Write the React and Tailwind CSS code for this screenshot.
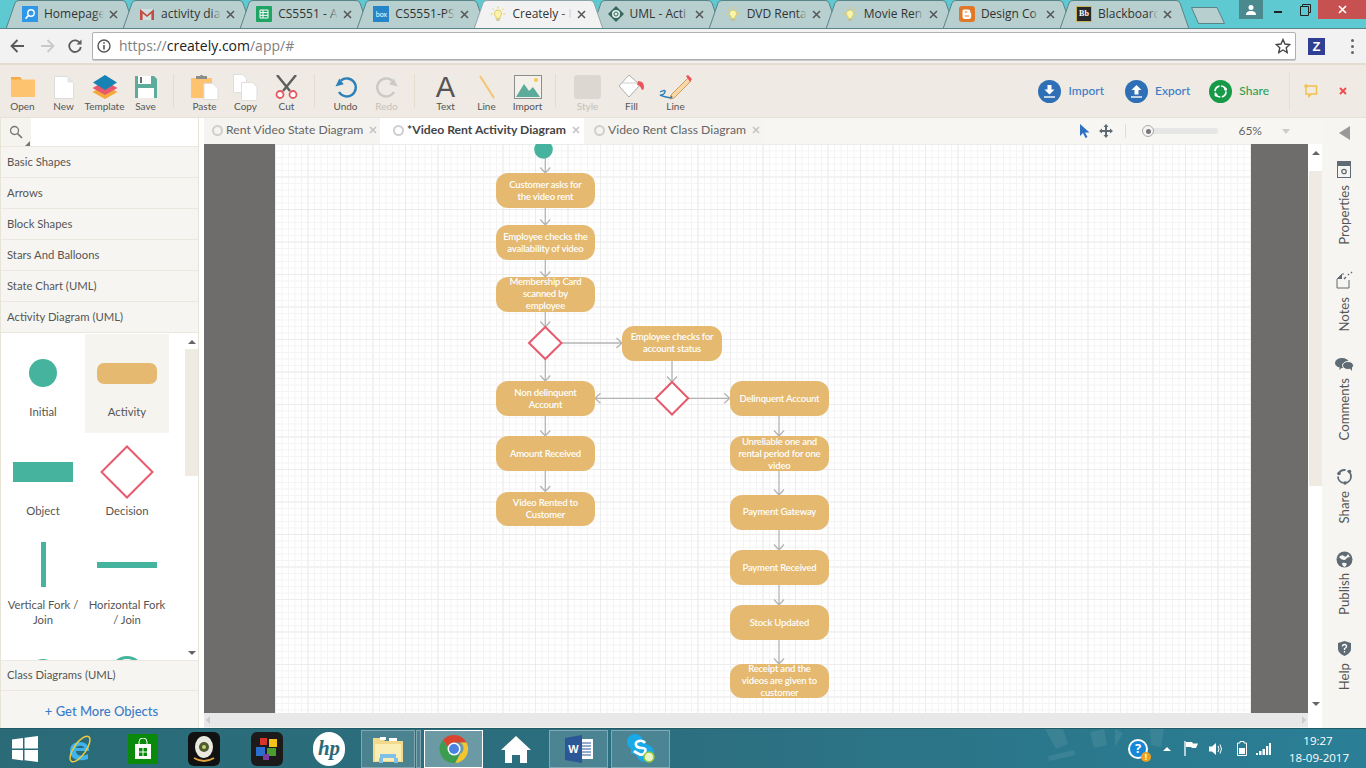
import React from 'react';

const uiFont = "[font-family:Lato,'Liberation_Sans',sans-serif]";

// ---------- browser chrome ----------
function Favicon({ kind }) {
    if (kind === 'search') return <div className="w-4 h-4 bg-[#2f96e8] flex items-center justify-center"><svg width="12" height="12" viewBox="0 0 12 12"><circle cx="7" cy="5" r="3.2" fill="none" stroke="#fff" strokeWidth="1.4" /><path d="M4.6 7.4 1.6 10.6" stroke="#fff" strokeWidth="1.6" /></svg></div>;
    if (kind === 'gmail') return <svg width="16" height="16" viewBox="0 0 16 16"><rect x="1" y="3" width="14" height="11" fill="#cfe0de" /><path d="M1 14V3l7 6 7-6v11h-2.6V7.4L8 11 3.6 7.4V14z" fill="#c44c40" /></svg>;
    if (kind === 'sheet') return <svg width="16" height="16" viewBox="0 0 16 16"><rect width="16" height="16" rx="1" fill="#1fa463" /><path d="M4 4h8v8H4zM4 6.6h8M4 9.3h8M7 4v8" fill="none" stroke="#fff" /></svg>;
    if (kind === 'box') return <div className="w-4 h-4 bg-[#2486c9] flex items-center justify-center text-[7px] leading-none text-white">box</div>;
    if (kind === 'blogger') return <svg width="16" height="16" viewBox="0 0 16 16"><rect width="16" height="16" rx="3" fill="#e0782a" /><path d="M5 3.5h4a2.4 2.4 0 0 1 2.4 2.4V7c.6 0 .8.4.8.8v2.7A2.5 2.5 0 0 1 9.700 13H6a2.500 2.500 0 0 1-2.500-2.500V5A1.500 1.500 0 0 1 5 3.500z" fill="#fff" /><path d="M5.800 6h2.500M5.800 10h4.200" stroke="#e0782a" strokeWidth="1.200" /></svg>;
    if (kind === 'bb') return <div className="w-4 h-4 bg-[#26282a] border border-[#c8b25a] flex items-center justify-center text-[8px] font-bold leading-none text-white [font-family:'Liberation_Serif',serif]">Bb</div>;
    if (kind === 'uml') return <svg width="16" height="16" viewBox="0 0 16 16"><path d="M8 0 16 8 8 16 0 8z" fill="#39695e" /><circle cx="8" cy="8" r="4" fill="#dfeee8" /><circle cx="8" cy="8" r="2" fill="none" stroke="#39695e" /></svg>;
    return (
        <svg width="18" height="18" viewBox="0 0 18 18">
            <path d="M9 4.500a4 4 0 0 0-2.400 7.200V14h4.800v-2.300A4 4 0 0 0 9 4.500z" fill="#fbf3a8" stroke="#d9c860" />
            <path d="M7 15h4v1.500H7z" fill="#bdb98c" />
            <path d="M9 .5v2.200M2.800 3l1.600 1.600M15.200 3l-1.600 1.600M.8 9h2.200M15 9h2.200" stroke="#ecc94b" strokeWidth="1.100" />
        </svg>
    );
}

const browserTabs = [
    ['search', 'Homepage'], ['gmail', 'activity dia'], ['sheet', 'CS5551 - A'], ['box', 'CS5551-PS'],
    ['bulb', 'Creately - I', true], ['uml', 'UML - Acti'], ['bulb', 'DVD Renta'], ['bulb', 'Movie Ren'],
    ['blogger', 'Design Co'], ['bb', 'Blackboard'],
];

function BrowserTab({ icon, title, active }) {
    const fade = active ? 'from-transparent to-[#f2f2f2]' : 'from-transparent to-[#b7cfcf]';
    return (
        <div className={`relative w-[129px] h-[28px] -mr-[11.9px] shrink-0 ${active ? 'z-10' : ''}`}>
            <svg className="absolute inset-0" width="129" height="29" viewBox="0 0 129 29">
                <path d="M0 29 9 3Q10 .5 13 .5H116Q119 .5 120 3L129 29Z" fill={active ? '#f2f2f2' : '#b7cfcf'} stroke={active ? '#8fa5a8' : '#5a8388'} />
            </svg>
            <div className="relative h-full flex items-center pl-[16px]">
                <div className="w-4 h-4 flex items-center justify-center shrink-0"><Favicon kind={icon} /></div>
                <div className="relative ml-[6px] w-[60px] overflow-hidden whitespace-nowrap text-[12px] leading-[16px] text-[#333] [font-family:'Open_Sans',sans-serif]">
                    {title}
                    <div className={`absolute inset-y-0 right-0 w-[10px] bg-gradient-to-r ${fade}`} />
                </div>
                <svg className="ml-[5px] shrink-0" width="9" height="9" viewBox="0 0 9 9"><path d="M1 1l7 7M8 1 1 8" stroke="#555" strokeWidth="1.500" /></svg>
            </div>
        </div>
    );
}

function TabStrip() {
    return (
        <div className="h-[28px] shrink-0 bg-[#5ec9d1] flex pl-[6px] relative overflow-hidden">
            {browserTabs.map((t) => <BrowserTab key={t[1]} icon={t[0]} title={t[1]} active={t[2]} />)}
            <svg className="ml-[14px] mt-[7px] shrink-0" width="34" height="17" viewBox="0 0 34 17"><path d="M.5 .5H26L33.500 16.500H7.500Z" fill="#b7cfcf" stroke="#5a8388" /></svg>
            <div className="ml-auto flex items-start">
                <div className="w-[24px] h-[19px] bg-[#4a8a8f] flex items-center justify-center">
                    <svg width="12" height="12" viewBox="0 0 12 12"><circle cx="6" cy="3.500" r="2.500" fill="#fff" /><path d="M1 11c0-3 2-4 5-4s5 1 5 4z" fill="#fff" /></svg>
                </div>
                <div className="w-[30px] h-[19px] flex items-center justify-center pt-[4px]"><div className="w-[8px] h-[2px] bg-[#222]" /></div>
                <div className="w-[25px] h-[19px] flex items-center justify-center">
                    <svg width="11" height="12" viewBox="0 0 11 12"><path d="M2.500 2.500V.5h8v8h-2M.5 2.500h8v9h-8z" fill="none" stroke="#222" /></svg>
                </div>
                <div className="w-[48px] h-[19px] bg-[#c75050] flex items-center justify-center">
                    <svg width="9" height="9" viewBox="0 0 9 9"><path d="M1 1l7 7M8 1 1 8" stroke="#fff" strokeWidth="1.600" /></svg>
                </div>
            </div>
        </div>
    );
}

function AddressRow() {
    return (
        <div className="h-[37px] shrink-0 bg-[#f2f2f2] border-t border-[#5a8388] border-b-2 border-b-[#e3dccf] flex items-center">
            <svg className="ml-[10px]" width="15" height="14" viewBox="0 0 15 14"><path d="M14 7H2M7.500 1 1.500 7l6 6" fill="none" stroke="#5a5a5a" strokeWidth="1.800" /></svg>
            <svg className="ml-[15px]" width="15" height="14" viewBox="0 0 15 14"><path d="M1 7h12M7.500 1l6 6-6 6" fill="none" stroke="#c9c9c9" strokeWidth="1.800" /></svg>
            <svg className="ml-[13px]" width="14" height="14" viewBox="0 0 14 14"><path d="M12.200 4.500A5.800 5.800 0 1 0 12.800 8" fill="none" stroke="#5a5a5a" strokeWidth="1.800" /><path d="M13.500 .5v5h-5z" fill="#5a5a5a" /></svg>
            <div className="ml-[10px] w-[1204px] h-[28px] bg-white border border-[#b0b0b0] rounded-[2px] shadow-[0_1px_0_#c8c8c8] flex items-center pl-[4px] pr-[4px]">
                <svg width="14" height="14" viewBox="0 0 14 14"><circle cx="7" cy="7" r="6" fill="none" stroke="#555" strokeWidth="1.400" /><path d="M7 6v4.500M7 3.200v1.600" stroke="#555" strokeWidth="1.600" /></svg>
                <div className="ml-[8px] text-[14px] leading-none text-[#808080] [font-family:'Open_Sans',sans-serif]">https://<span className="text-[#222]">creately.com</span>/app/#</div>
                <svg className="ml-auto" width="16" height="16" viewBox="0 0 16 16"><path d="M8 1.500l2 4.500 4.800.5-3.600 3.200 1 4.800L8 12l-4.200 2.500 1-4.800L1.200 6.500 6 6z" fill="none" stroke="#444" strokeWidth="1.400" /></svg>
            </div>
            <div className="ml-[12px] w-[17px] h-[17px] bg-[#2f3f94] flex items-center justify-center text-[13px] font-bold leading-none text-white [font-family:'Liberation_Sans',sans-serif]">Z</div>
            <div className="ml-[26px] flex flex-col gap-[3px]">
                <div className="w-[3px] h-[3px] rounded-full bg-[#666]" />
                <div className="w-[3px] h-[3px] rounded-full bg-[#666]" />
                <div className="w-[3px] h-[3px] rounded-full bg-[#666]" />
            </div>
        </div>
    );
}

// ---------- creately toolbar ----------
const ToolIcons = {
    open: <svg width="24" height="20" viewBox="0 0 24 20"><path d="M0 0h9l2 2.500h13V20H0z" fill="#fdc36f" /><path d="M0 0h9l2 2.500H0z" fill="#f5ab45" /></svg>,
    page: <svg width="20" height="23" viewBox="0 0 20 23"><path d="M.5 .5h13l6 6v16H.5z" fill="#fff" stroke="#dcdcdc" /><path d="M13.500 .5v6h6z" fill="#e6e6e6" /></svg>,
    template: <svg width="26" height="24" viewBox="0 0 26 24"><path d="M13 10 25.500 17 13 24 .5 17z" fill="#f7a83c" /><path d="M13 6 25.500 13 13 20 .5 13z" fill="#e85a6b" /><path d="M13 0 25 7.500 13 15 1 7.500z" fill="#1783b5" /></svg>,
    save: <svg width="22" height="22" viewBox="0 0 22 22"><path d="M0 0h19l3 3v19H0z" fill="#5cab9b" /><path d="M3 0h13v8H3z" fill="#fff" /><path d="M5 1h2v6H5z" fill="#6b6b6b" /><path d="M3 12h16v10H3z" fill="#fff" /></svg>,
    paste: <svg width="28" height="26" viewBox="0 0 28 26"><path d="M0 4h21v20H0z" fill="#fdc36f" /><path d="M5 2h4q1.500-2.500 3 0h4v3H5z" fill="#8c8c8c" /><path d="M13 9.500h9l5 5V25.500H13z" fill="#fff" stroke="#dedede" /></svg>,
    copy: <svg width="25" height="27" viewBox="0 0 25 27"><path d="M.5 .5h9l4 4v14H.5z" fill="#fff" stroke="#dedede" /><path d="M8.500 8.500h11l4.500 4.500v13.500H8.500z" fill="#fff" stroke="#dedede" /></svg>,
    cut: <svg width="23" height="24" viewBox="0 0 23 24"><path d="M2 0l13 16M21 0 8 16" stroke="#5e5e5e" strokeWidth="2.400" /><circle cx="5" cy="19.500" r="3.500" fill="#fff" stroke="#e8555f" strokeWidth="1.800" /><circle cx="18" cy="19.500" r="3.500" fill="#fff" stroke="#e8555f" strokeWidth="1.800" /></svg>,
    undo: <svg width="24" height="24" viewBox="0 0 24 24"><path d="M7 5.500A9 9 0 1 1 5 17" fill="none" stroke="#2c7fb8" strokeWidth="2.400" /><path d="M1 11 9.500 10 6 3.500z" fill="#2c7fb8" transform="rotate(-8 5 8)" /></svg>,
    redo: <svg width="24" height="24" viewBox="0 0 24 24"><path d="M17 5.500A9 9 0 1 0 19 17" fill="none" stroke="#c9c9c5" strokeWidth="2.400" /><path d="M23 11 14.500 10 18 3.500z" fill="#c9c9c5" transform="rotate(8 19 8)" /></svg>,
    line: <svg width="18" height="24" viewBox="0 0 18 24"><path d="M2 1 16 23" stroke="#f6c36f" strokeWidth="2" /></svg>,
    image: <svg width="28" height="24" viewBox="0 0 28 24"><rect x=".5" y=".5" width="27" height="23" fill="#f4f1ea" stroke="#8d8d8d" /><path d="M2 22 10 9l5 7 4-4 7 10z" fill="#5cab9b" /><circle cx="22" cy="5" r="2" fill="#f6c64f" /></svg>,
    style: <div className="w-[27px] h-[24px] rounded-[3px] bg-[#dcd8d1]" />,
    fill: <svg width="28" height="26" viewBox="0 0 28 26"><path d="M11 1 22 11 11 23 1 12z" fill="#fff" stroke="#adadad" /><path d="M4 9h17" stroke="#cfcfcf" /><path d="M20 7q6 0 6 6 0 3-2 3-2-5-5-5z" fill="#e8555f" /></svg>,
    pencil: <svg width="34" height="26" viewBox="0 0 34 26"><path d="M12 21 29 4l3 3-17 17-4 1z" fill="#f7d9a8" stroke="#d89a58" /><path d="M27 2l2-1 4 4-2 3z" fill="#e8555f" /><path d="M1 18q6-3 5 0t-4 3 5 2 5-1" fill="none" stroke="#2c7fb8" strokeWidth="1.300" /></svg>,
};

function ToolItem({ icon, label, muted, children }) {
    return (
        <div className="w-[41px] flex flex-col items-center shrink-0">
            <div className="h-[26px] flex items-center justify-center">{children || ToolIcons[icon]}</div>
            <div className={`text-[10px] leading-[12px] ${muted ? 'text-[#c4c1ba]' : 'text-[#555]'}`}>{label}</div>
        </div>
    );
}

const Gap = () => (
    <div className="w-[18px] h-[34px] shrink-0 pl-[7px]"><div className="w-px h-full bg-[#e3ddd0]" /></div>
);

function BigButton({ kind, label, color, bg }) {
    return (
        <div className="flex items-center gap-[7px]">
            <div className={`w-[23px] h-[23px] rounded-full flex items-center justify-center ${bg}`}>
                {kind === 'share' ? (
                    <svg width="15" height="15" viewBox="0 0 15 15"><circle cx="7.500" cy="7.500" r="5.500" fill="none" stroke="#fff" strokeWidth="1.700" strokeDasharray="7 1.600" /><circle cx="3" cy="11" r="1.500" fill="#fff" /><circle cx="12.500" cy="5" r="1.500" fill="#fff" /></svg>
                ) : (
                    <svg width="13" height="14" viewBox="0 0 13 14">
                        <path d={kind === 'down' ? 'M4.500 1h4v4.500h3L6.500 10.500 1.500 5.500h3z' : 'M6.500 1l5 5h-3v4.500h-4V6h-3z'} fill="#fff" />
                        <path d="M1 13h11" stroke="#fff" strokeWidth="1.400" />
                    </svg>
                )}
            </div>
            <span className={`text-[12px] font-medium leading-none ${color}`}>{label}</span>
        </div>
    );
}

function AppToolbar() {
    return (
        <div className="h-[53px] shrink-0 bg-[#efeae3] border-b border-[#e7e1d6] flex items-start pt-[9px] pl-[2px]">
            <ToolItem icon="open" label="Open" /><ToolItem icon="page" label="New" /><ToolItem icon="template" label="Template" /><ToolItem icon="save" label="Save" />
            <Gap />
            <ToolItem icon="paste" label="Paste" /><ToolItem icon="copy" label="Copy" /><ToolItem icon="cut" label="Cut" />
            <Gap />
            <ToolItem icon="undo" label="Undo" /><ToolItem icon="redo" label="Redo" muted />
            <Gap />
            <ToolItem label="Text"><span className="text-[29px] leading-[26px] text-[#555] [font-family:'Liberation_Sans',sans-serif]">A</span></ToolItem>
            <ToolItem icon="line" label="Line" /><ToolItem icon="image" label="Import" />
            <Gap />
            <div className="w-px" />
            <ToolItem icon="style" label="Style" muted />
            <div className="w-[3px]" />
            <ToolItem icon="fill" label="Fill" />
            <div className="w-[3px]" />
            <ToolItem icon="pencil" label="Line" />
            <div className="ml-auto flex items-center h-[40px] -mt-[3px]">
                <BigButton kind="down" label="Import" color="text-[#3a7cc8]" bg="bg-[#2f6fb5]" />
                <div className="w-[21px]" />
                <BigButton kind="up" label="Export" color="text-[#3a7cc8]" bg="bg-[#2f6fb5]" />
                <div className="w-[19px]" />
                <BigButton kind="share" label="Share" color="text-[#2aa050]" bg="bg-[#169a47]" />
                <div className="ml-[20px] w-px h-[38px] bg-[#e5dfd3]" />
                <svg className="ml-[14px]" width="14" height="14" viewBox="0 0 14 14"><path d="M2 2h10.500v8H7l-2 2.500V10H2z" fill="none" stroke="#efc04a" strokeWidth="1.400" /><rect x=".5" y=".5" width="3" height="3" fill="#efc04a" /></svg>
                <svg className="ml-[21px] mr-[19px]" width="8" height="8" viewBox="0 0 8 8"><path d="M1 1l6 6M7 1 1 7" stroke="#ee4a4a" strokeWidth="1.800" /></svg>
            </div>
        </div>
    );
}

// ---------- left sidebar ----------
const sections = ['Basic Shapes', 'Arrows', 'Block Shapes', 'Stars And Balloons', 'State Chart (UML)', 'Activity Diagram (UML)'];

function ShapeCell({ label, active, shapeClass, children }) {
    return (
        <div className={`h-[99px] flex flex-col items-center ${active ? 'bg-[#f6f4ef]' : ''}`}>
            <div className={`w-full flex items-center justify-center shrink-0 ${shapeClass}`}>{children}</div>
            <div className="text-[11.3px] leading-[15px] text-[#555] text-center">{label}</div>
        </div>
    );
}

function Sidebar() {
    return (
        <div className="w-[204px] shrink-0 bg-white flex">
            <div className="w-[199px] flex flex-col bg-[#f7f5f1] border-l border-[#e9e4d8] border-r border-r-[#e9e4d8] text-[#555]">
                <div className="h-[29px] shrink-0 bg-white border-b border-[#ece8df] flex">
                    <div className="relative w-[30px] bg-[#f6f4ef] flex items-center justify-center">
                        <svg width="14" height="14" viewBox="0 0 14 14"><circle cx="5.500" cy="5.500" r="4" fill="none" stroke="#777" strokeWidth="1.300" /><path d="M8.500 8.500 13 13" stroke="#777" strokeWidth="1.700" /></svg>
                        <div className="absolute right-[1px] bottom-0 w-0 h-0 border-l-[5px] border-l-transparent border-b-[5px] border-b-[#777]" />
                    </div>
                </div>
                {sections.map((s) => (
                    <div key={s} className="h-[31px] shrink-0 border-b border-[#ece8df] flex items-center pl-[6px] text-[11.3px] leading-none">{s}</div>
                ))}
                <div className="h-[328px] shrink-0 bg-white border-b border-[#ece8df] flex overflow-hidden pt-px">
                    <div className="w-[168px] shrink-0 grid grid-cols-2 content-start">
                        <ShapeCell label="Initial" shapeClass="h-[70px]">
                            <div className="w-[28px] h-[28px] rounded-full bg-[#45b39d] mt-[8px]" />
                        </ShapeCell>
                        <ShapeCell label="Activity" active shapeClass="h-[70px]">
                            <div className="w-[60px] h-[21px] rounded-[7px] bg-[#e5b96f] mt-[8px]" />
                        </ShapeCell>
                        <ShapeCell label="Object" shapeClass="h-[70px]">
                            <div className="w-[60px] h-[20px] bg-[#45b39d] mt-[8px]" />
                        </ShapeCell>
                        <ShapeCell label="Decision" shapeClass="h-[70px]">
                            <svg className="mt-[8px]" width="54" height="54" viewBox="0 0 54 54"><path d="M27 1.500 52.500 27 27 52.500 1.500 27z" fill="#fff" stroke="#e85a6b" strokeWidth="2" /></svg>
                        </ShapeCell>
                        <ShapeCell label="Vertical Fork / Join" shapeClass="h-[65px]">
                            <div className="w-[5px] h-[45px] bg-[#45b39d]" />
                        </ShapeCell>
                        <ShapeCell label="Horizontal Fork / Join" shapeClass="h-[65px]">
                            <div className="w-[60px] h-[6px] bg-[#45b39d]" />
                        </ShapeCell>
                        <div className="h-[99px] flex justify-center pt-[28px]"><div className="w-[28px] h-[28px] rounded-full border-[3px] border-[#45b39d]" /></div>
                        <div className="h-[99px] flex justify-center pt-[25px]"><div className="w-[34px] h-[34px] rounded-full border-[3px] border-[#45b39d]" /></div>
                    </div>
                    <div className="ml-[17px] w-[12px] flex flex-col items-center">
                        <div className="h-[15px] shrink-0 flex items-center justify-center"><div className="w-0 h-0 border-x-[4px] border-x-transparent border-b-[4px] border-b-[#666]" /></div>
                        <div className="h-[127px] w-[14px] shrink-0 bg-[#efebe2]" />
                        <div className="mt-auto h-[14px] flex items-center justify-center"><div className="w-0 h-0 border-x-[4px] border-x-transparent border-t-[4px] border-t-[#666]" /></div>
                    </div>
                </div>
                <div className="h-[30px] shrink-0 border-b border-[#ece8df] flex items-center pl-[6px] pb-[2px] text-[11.3px] leading-none">Class Diagrams (UML)</div>
                <div className="flex-1 flex items-start justify-center pt-[14px] pl-[4px] text-[13px] font-medium leading-none text-[#3a7cc8]">+ Get More Objects</div>
            </div>
        </div>
    );
}

// ---------- canvas ----------
const nodes = [
    { x: 495.7, y: 173, lines: ['Customer asks for', 'the video rent'] },
    { x: 495.7, y: 225, lines: ['Employee checks the', 'availability of video'] },
    { x: 495.7, y: 277.3, lines: ['Membership Card', 'scanned by', 'employee'], lift: 3 },
    { x: 622.3, y: 326, lines: ['Employee checks for', 'account status'], lift: 2 },
    { x: 495.7, y: 381, lines: ['Non delinquent', 'Account'] },
    { x: 729.7, y: 381, lines: ['Delinquent Account'] },
    { x: 495.7, y: 436, lines: ['Amount Received'] },
    { x: 495.7, y: 491.7, lines: ['Video Rented to', 'Customer'], lift: 2 },
    { x: 729.7, y: 436, lines: ['Unreliable one and', 'rental period for one', 'video'] },
    { x: 729.7, y: 495, lines: ['Payment Gateway'], lift: 2 },
    { x: 729.7, y: 550, lines: ['Payment Received'] },
    { x: 729.7, y: 605, lines: ['Stock Updated'] },
    { x: 729.7, y: 663.7, lines: ['Receipt and the', 'videos are given to', 'customer'], lift: 2 },
];

const downLinks = [
    [545.3, 158, 173], [545.3, 207, 225], [545.3, 260, 277], [545.3, 312, 327], [545.3, 359, 381],
    [672, 360, 382], [545.3, 415, 436], [545.3, 471, 491.5], [779, 415, 436], [779, 471, 495], [779, 529, 550], [779, 585, 605], [779, 640, 664],
];

function Connectors() {
    return (
        <svg className="absolute inset-0" width="976" height="569" viewBox="275 144 976 569">
            <g fill="none" stroke="#b4b4b4" strokeWidth="1.300">
                {downLinks.map(([x, a, b]) => (
                    <path key={`${x}-${a}`} d={`M${x} ${a}V${b}M${x - 5} ${b - 5.500}L${x} ${b}L${x + 5} ${b - 5.500}`} />
                ))}
                <path d="M561 343H622M616.500 338 622 343 616.500 348" />
                <path d="M656 398.300H595M600.500 393.300 595 398.300 600.500 403.300" />
                <path d="M688 398.300H729.700M724.200 393.300 729.700 398.300 724.200 403.300" />
            </g>
            <circle cx="543.5" cy="149.500" r="9.300" fill="#45b39d" />
            <path d="M545.300 327 561.500 343 545.300 359 529 343z" fill="#fff" stroke="#e85a6b" strokeWidth="2" />
            <path d="M672 382 688.200 398.300 672 414.500 655.800 398.300z" fill="#fff" stroke="#e85a6b" strokeWidth="2" />
        </svg>
    );
}

function Canvas() {
    return (
        <div className="flex-1 min-h-0 bg-[#6e6d6b] pl-[71px] pr-[57px]">
            <div className="relative h-full overflow-hidden bg-white bg-[linear-gradient(#ececec_1px,transparent_1px),linear-gradient(90deg,#ececec_1px,transparent_1px),linear-gradient(#f4f4f4_1px,transparent_1px),linear-gradient(90deg,#f4f4f4_1px,transparent_1px)] bg-[size:32.5px_32.5px,32.5px_32.5px,6.5px_6.5px,6.5px_6.5px]">
                <Connectors />
                {nodes.map((n) => (
                    <div
                        key={n.lines[0]}
                        className="absolute w-[99.5px] h-[34.5px] rounded-[12px] bg-[#e5b96f] flex flex-col items-center justify-center text-[9.5px] font-semibold tracking-[-0.2px] leading-[12px] text-white text-center whitespace-nowrap"
                        style={{ left: n.x - 275, top: n.y - 144, paddingTop: 2, paddingBottom: n.lift || 0 }}
                    >
                        {n.lines.map((l) => <div key={l}>{l}</div>)}
                    </div>
                ))}
            </div>
        </div>
    );
}

function DocTab({ title, active, cls }) {
    return (
        <div className={`h-full shrink-0 flex items-center pb-[2px] ${active ? 'bg-white' : 'bg-[#f6f4f0]'} ${cls}`}>
            <div className="w-[11px] h-[11px] rounded-full border-2 border-[#cfcfcf] shrink-0" />
            <span className={`ml-[3px] text-[12.2px] leading-none whitespace-nowrap ${active ? 'font-bold text-[#444]' : 'text-[#666]'}`}>{title}</span>
            <svg className="ml-[6px] shrink-0" width="8" height="8" viewBox="0 0 8 8"><path d="M1 1l6 6M7 1 1 7" stroke="#c5c5c5" strokeWidth="1.700" /></svg>
        </div>
    );
}

function CenterPane() {
    return (
        <div className="flex-1 min-w-0 flex flex-col bg-white">
            <div className="h-[26px] shrink-0 bg-[#f8f6f2] flex items-stretch">
                <DocTab title="Rent Video State Diagram" cls="w-[176px] pl-[8px]" />
                <div className="w-[5px] bg-white" />
                <DocTab title="*Video Rent Activity Diagram" active cls="w-[199px] pl-[8px]" />
                <DocTab title="Video Rent Class Diagram" cls="w-[180px] pl-[10px]" />
                <div className="ml-auto flex items-center text-[#666]">
                    <svg width="11" height="14" viewBox="0 0 11 14"><path d="M1 0v12l3-3 2.500 5 2-1L6 8.500h4.500z" fill="#2f6fc4" /></svg>
                    <svg className="ml-[9px]" width="14" height="14" viewBox="0 0 14 14"><path d="M7 0 9.500 3H8v3h3V4.500L14 7l-3 2.500V8H8v3h1.500L7 14l-2.500-3H6V8H3v1.500L0 7l3-2.500V6h3V3H4.500z" fill="#5e6b75" /></svg>
                    <div className="ml-[12px] w-px h-[14px] bg-[#ddd]" />
                    <div className="relative ml-[17px] w-[75px] h-[6px] bg-[#e6e6e6] rounded-full">
                        <div className="absolute -left-[1px] -top-[3px] w-[12px] h-[12px] rounded-full bg-[#f5f5f5] border border-[#aaa] flex items-center justify-center"><div className="w-[5px] h-[5px] rounded-full bg-[#777]" /></div>
                    </div>
                    <span className="ml-[20px] text-[12px] leading-none">65%</span>
                    <div className="ml-[20px] mr-[32px] w-0 h-0 border-x-[4px] border-x-transparent border-t-[5px] border-t-[#ccc]" />
                </div>
            </div>
            <div className="flex-1 min-h-0 flex">
                <div className="flex-1 min-w-0 flex flex-col">
                    <Canvas />
                    <div className="h-[14px] shrink-0 bg-[#e8e8e8] flex items-center justify-between px-[2px]">
                        <div className="w-0 h-0 border-y-[4px] border-y-transparent border-r-[4px] border-r-[#ccc]" />
                        <div className="w-0 h-0 border-y-[4px] border-y-transparent border-l-[4px] border-l-[#ccc]" />
                    </div>
                    <div className="h-px shrink-0 bg-[#f3f1ec]" />
                </div>
                <div className="w-[14px] shrink-0 ml-px -mr-px flex flex-col items-center bg-white">
                    <div className="h-[27px] shrink-0 flex items-start justify-center pt-[7px]"><div className="w-0 h-0 border-x-[4px] border-x-transparent border-b-[4px] border-b-[#666]" /></div>
                    <div className="w-full h-[315px] shrink-0 bg-[#efebe2]" />
                    <div className="mt-[216px] w-0 h-0 border-x-[4px] border-x-transparent border-t-[4px] border-t-[#666]" />
                </div>
            </div>
        </div>
    );
}

// ---------- right rail ----------
const railItems = [
    {
        label: 'Properties', cls: 'mt-[21px]', textCls: 'mt-[7px]',
        icon: <svg width="15" height="17" viewBox="0 0 15 17"><rect x=".5" y=".5" width="13" height="16" fill="none" stroke="#5e6b75" /><rect width="14" height="5" fill="#5e6b75" /><circle cx="7" cy="10.500" r="2.200" fill="none" stroke="#5e6b75" strokeWidth="1.300" /></svg>,
    },
    {
        label: 'Notes', cls: 'mt-[26px]', textCls: 'mt-[8px]',
        icon: <svg width="17" height="18" viewBox="0 0 17 18"><path d="M8 3H6L1 8v9h12V9" fill="none" stroke="#5e6b75" /><path d="M1 8h5V3z" fill="#5e6b75" /><path d="M8 8l2-2M12 4l1-1M15 2l1-1" stroke="#5e6b75" strokeWidth="1.400" /></svg>,
    },
    {
        label: 'Comments', cls: 'mt-[27px]', textCls: 'mt-[7px]',
        icon: <svg width="19" height="13" viewBox="0 0 19 13"><ellipse cx="7" cy="5" rx="7" ry="5" fill="#5e6b75" /><path d="M5 9 4 12l4-3z" fill="#5e6b75" /><ellipse cx="13" cy="7.500" rx="5.500" ry="4" fill="#5e6b75" stroke="#f7f5f1" /><path d="M15 10.500l2 2.500v-4z" fill="#5e6b75" /></svg>,
    },
    {
        label: 'Share', cls: 'mt-[27px]', textCls: 'mt-[6px]',
        icon: <svg width="17" height="17" viewBox="0 0 17 17"><circle cx="8.500" cy="8.500" r="6.500" fill="none" stroke="#5e6b75" strokeWidth="1.800" strokeDasharray="9 2" /><circle cx="3" cy="5.500" r="1.800" fill="#5e6b75" /><circle cx="13.500" cy="3.500" r="1.800" fill="#5e6b75" /><circle cx="9" cy="15" r="1.800" fill="#5e6b75" /></svg>,
    },
    {
        label: 'Publish', cls: 'mt-[28px]', textCls: 'mt-[5px]',
        icon: <svg width="17" height="17" viewBox="0 0 17 17"><circle cx="8.500" cy="8.500" r="8" fill="#5e6b75" /><path d="M3 6q3-3 5-1t4-2l2 3q-3 0-4 2t-5 0zM6 12q3-1 5 1l-2 3q-3-1-3-4z" fill="#f7f5f1" /></svg>,
    },
    {
        label: 'Help', cls: 'mt-[26px]', textCls: 'mt-[7px]',
        icon: <svg width="15" height="15" viewBox="0 0 15 15"><path d="M7.500 0 14 2v6q0 4-6.500 7Q1 12 1 8V2z" fill="#5e6b75" /><path d="M5.500 5.500Q5.500 3.500 7.500 3.500T9.500 5.500Q9.500 6.800 7.500 7.500V9M7.500 10v1.500" fill="none" stroke="#fff" strokeWidth="1.300" /></svg>,
    },
];

function RightRail() {
    return (
        <div className="w-[44px] shrink-0 bg-[#f7f5f1] flex flex-col items-center pl-[1px]">
            <div className="mt-[8px] h-[14px] w-0 border-y-[7px] border-y-transparent border-r-[11px] border-r-[#999] box-border" />
            <div className="flex flex-col items-center">
                {railItems.map((r) => (
                    <div key={r.label} className={`flex flex-col items-center ${r.cls}`}>
                        {r.icon}
                        <div className={`[writing-mode:vertical-rl] rotate-180 text-[13.2px] leading-none text-[#555] ${r.textCls}`}>{r.label}</div>
                    </div>
                ))}
            </div>
        </div>
    );
}

// ---------- windows taskbar ----------
function TaskButton({ children, active, widthCls }) {
    return (
        <div className={`h-[38px] flex items-center justify-center border ${widthCls || 'w-[59px]'} ${active ? 'border-white bg-white/30' : 'border-white/30 bg-white/15'}`}>
            {children}
        </div>
    );
}

function Taskbar() {
    return (
        <div className="relative h-[40px] shrink-0 bg-gradient-to-r from-[#2b6b78] via-[#2c6f80] to-[#2a7f96] flex items-center overflow-hidden border-t border-[#1f5a66] [font-family:'Open_Sans',sans-serif]">
            <svg className="absolute inset-0" width="1366" height="40" viewBox="0 0 1366 40">
                <g fill="#fff" opacity=".08">
                    <path d="M1045 0h18l5 15-12 5zM1048 27l26-6 1 5-26 6zM1090 3l14-3 3 16-13 3zM1150 0h14l-3 18-10-2zM1115 0l8 4-8 14z" />
                </g>
            </svg>
            <div className="relative flex items-center w-full h-full">
                <svg className="ml-[12px] shrink-0" width="26" height="26" viewBox="0 0 26 26"><path d="M0 3.600 11 2v10.500H0zM12.500 1.800 26 0v12.500H12.500zM0 14h11v10.500L0 23zM12.500 14H26v12l-13.500-1.800z" fill="#fff" /></svg>
                <svg className="ml-[27px] shrink-0" width="30" height="30" viewBox="0 0 30 30"><path d="M15 8c6 0 9 3.500 9 9H11c0 5 6 6 12 3v5c-8 3-18 1-18-8 0-6 4-9 10-9zm4 6c0-3-7-3-8 0z" fill="#3fb4ec" /><ellipse cx="15" cy="15" rx="15" ry="6" fill="none" stroke="#efc93e" strokeWidth="1.500" transform="rotate(-55 15 15)" /></svg>
                <div className="ml-[33px] w-[30px] h-[30px] bg-[#0a8a0a] flex items-center justify-center shrink-0">
                    <svg width="18" height="22" viewBox="0 0 18 22"><path d="M5 6V4a4 4 0 0 1 8 0v2" fill="none" stroke="#fff" /><path d="M1 6h16v15H1z" fill="#fff" /><path d="M5 10h3.500v3.500H5zM9.500 10H13v3.500H9.500zM5 14.500h3.500V18H5zM9.500 14.500H13V18H9.500z" fill="#0a8a0a" /></svg>
                </div>
                <div className="ml-[30px] w-[32px] h-[34px] rounded-[6px] bg-[#111] flex items-center justify-center shrink-0">
                    <svg width="26" height="28" viewBox="0 0 26 28"><ellipse cx="13" cy="12" rx="9" ry="11" fill="#e9e9df" /><circle cx="13" cy="12" r="5" fill="#505a30" /><circle cx="13" cy="12" r="2" fill="#c2d46a" /><path d="M3 23q10 6 20 0" fill="none" stroke="#e0a43c" strokeWidth="2" /></svg>
                </div>
                <div className="ml-[31px] w-[32px] h-[34px] rounded-[6px] bg-[#1c1a1a] flex items-center justify-center shrink-0">
                    <svg width="26" height="26" viewBox="0 0 26 26"><path d="M6 2h7v7H6z" fill="#d8352a" /><path d="M15 3h8v8h-8z" fill="#f5c21c" /><path d="M2 11h9v9H2z" fill="#2a6fd0" /><path d="M13 12h9v8h-9z" fill="#4a9e2f" /><path d="M9 18h6v6H9z" fill="#7a3da0" /></svg>
                </div>
                <div className="ml-[30px] w-[32px] h-[34px] rounded-full bg-white flex items-center justify-center shrink-0 overflow-hidden">
                    <span className="text-[21px] italic font-bold leading-none text-[#2b6b78] [font-family:'Liberation_Serif',serif]">hp</span>
                </div>
                <div className="ml-[16px] flex items-center shrink-0">
                    <TaskButton widthCls="w-[54px]">
                        <svg width="32" height="30" viewBox="0 0 32 30"><path d="M1 4h10l2 3h18v21H1z" fill="#f3d98b" /><path d="M3 10h26v17H3z" fill="#fbeeb4" /><path d="M8 3h6v3H8zM17 4h8v3h-8z" fill="#fff" /><path d="M8 20h16v4h2v5h-4v-5H11v5H7v-5h1z" fill="#7dc0e8" /></svg>
                    </TaskButton>
                    <div className="ml-px h-[38px] w-[5px] border border-white/30 bg-white/15" />
                </div>
                <div className="ml-[3px] shrink-0">
                    <TaskButton active>
                        <svg width="30" height="30" viewBox="0 0 30 30"><path d="M15 1a14 14 0 0 1 12.500 7.500H15a6.500 6.500 0 0 0-6.200 4.500L4 6a14 14 0 0 1 11-5z" fill="#d9442e" /><path d="M27.500 8.500A14 14 0 0 1 16 29l5-9a6.500 6.500 0 0 0 .1-11.500z" fill="#f5c530" /><path d="M4 6l6.500 11a6.500 6.500 0 0 0 10.500 3l-5 9A14 14 0 0 1 4 6z" fill="#3c9d4e" /><circle cx="15" cy="15" r="6.500" fill="#fff" /><circle cx="15" cy="15" r="5" fill="#4a82e0" /></svg>
                    </TaskButton>
                </div>
                <svg className="ml-[18px] shrink-0" width="30" height="28" viewBox="0 0 30 28"><path d="M15 1 30 15h-4v13h-7v-8h-8v8H4V15H0z" fill="#fff" /></svg>
                <div className="ml-[18px] shrink-0">
                    <TaskButton>
                        <svg width="30" height="30" viewBox="0 0 30 30"><path d="M16 5h13v20H16z" fill="#fff" /><path d="M18 9h9M18 12h9M18 15h9M18 18h9M18 21h9" stroke="#2b5797" /><path d="M1 4 18 1v28L1 26z" fill="#2b5797" /><text x="9.500" y="19" textAnchor="middle" fontSize="11" fontWeight="700" fill="#fff" fontFamily="Liberation Sans">W</text></svg>
                    </TaskButton>
                </div>
                <div className="ml-[3px] relative shrink-0">
                    <TaskButton>
                        <svg width="30" height="30" viewBox="0 0 30 30"><circle cx="9" cy="8" r="8" fill="#18a9e8" /><circle cx="19" cy="19" r="9" fill="#18a9e8" /><path d="M5 6h15v14H5z" fill="#18a9e8" /><path d="M19 9q-2-3-6-2t-3 4 6 3 3 4-6 2-5-3" fill="none" stroke="#fff" strokeWidth="2.600" /><circle cx="23" cy="23" r="5" fill="#e8f4c8" stroke="#8cc63f" strokeWidth="1.500" /></svg>
                    </TaskButton>
                </div>
                <div className="ml-auto flex items-center text-white">
                    <div className="relative w-[20px] h-[20px] rounded-full bg-white flex items-center justify-center">
                        <div className="w-[16px] h-[16px] rounded-full bg-[#1587d8] flex items-center justify-center text-[13px] font-bold leading-none text-white">?</div>
                        <div className="absolute -right-[3px] -bottom-[3px] w-[10px] h-[10px] rounded-full bg-[#f0a020] flex items-center justify-center text-[8px] font-bold leading-none text-white">!</div>
                    </div>
                    <div className="ml-[15px] w-0 h-0 border-x-[4px] border-x-transparent border-b-[4px] border-b-white" />
                    <svg className="ml-[13px]" width="15" height="15" viewBox="0 0 15 15"><path d="M1 0v15" stroke="#fff" strokeWidth="1.300" /><path d="M2 1h6l1 1.500h5L12 7H8L7 6H2z" fill="#fff" /></svg>
                    <svg className="ml-[10px]" width="15" height="14" viewBox="0 0 15 14"><path d="M0 4.500h3L7 1v12L3 9.500H0z" fill="#fff" /><path d="M9 4q2 3 0 6M11 2.500q3 4.500 0 9" fill="none" stroke="#fff" /></svg>
                    <svg className="ml-[13px]" width="10" height="15" viewBox="0 0 10 15"><path d="M3 .5h4v1.500h2.500v12.500H.5V2H3z" fill="none" stroke="#fff" /><path d="M2 7h6v6H2z" fill="#fff" /></svg>
                    <svg className="ml-[9px]" width="15" height="12" viewBox="0 0 15 12"><path d="M0 10h2v2H0zM3 8h2.500v4H3zM6.500 6H9v6H6.500zM10 3h2.200v9H10zM13 0h2v12h-2z" fill="#fff" /></svg>
                    <div className="ml-[18px] mr-[19px] w-[58px] text-center text-[11.5px] leading-[17px] text-white">
                        <div>19:27</div>
                        <div className="whitespace-nowrap">18-09-2017</div>
                    </div>
                </div>
            </div>
        </div>
    );
}

export default function App() {
    return (
        <div className={`w-[1366px] h-[768px] overflow-hidden flex flex-col bg-white ${uiFont}`}>
            <TabStrip />
            <AddressRow />
            <AppToolbar />
            <div className="flex-1 min-h-0 flex">
                <Sidebar />
                <CenterPane />
                <RightRail />
            </div>
            <Taskbar />
        </div>
    );
}
